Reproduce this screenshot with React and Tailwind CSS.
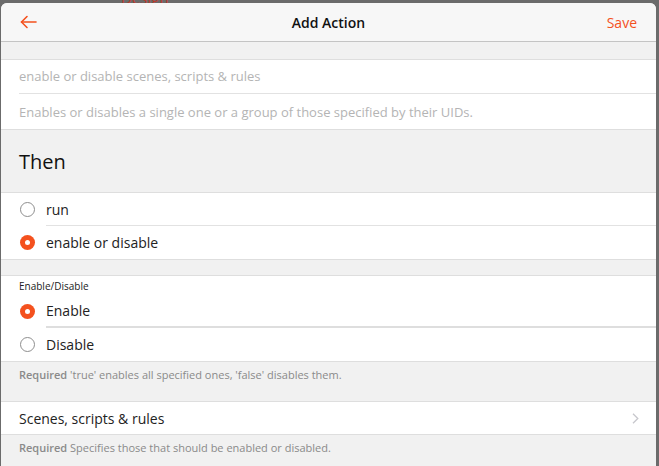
import React, { useState } from 'react';

function Radio({ checked }) {
    return checked ? (
        <span className="flex h-[15px] w-[15px] shrink-0 items-center justify-center rounded-full bg-[#f4511e]">
            <span className="h-[5px] w-[5px] rounded-full bg-white" />
        </span>
    ) : (
        <span className="h-[15px] w-[15px] shrink-0 rounded-full border border-[#8e8e8e] bg-white" />
    );
}

function RadioRow({ label, checked, onClick, divider, thick }) {
    return (
        <div className="flex h-[33px] cursor-pointer items-stretch" onClick={onClick}>
            <div className="flex w-[45px] shrink-0 items-center pl-[19px]">
                <Radio checked={checked} />
            </div>
            <div
                className={`flex flex-1 items-center text-[14px] text-[#222] ${
                    divider ? (thick ? 'border-b-2 border-[#dedede]' : 'border-b border-[#e2e2e2]') : ''
                }`}
            >
                {label}
            </div>
        </div>
    );
}

export default function App() {
    const [mode, setMode] = useState('toggle');
    const [enable, setEnable] = useState(true);

    return (
        <div
            className="relative h-[466px] w-[659px] overflow-hidden bg-[#6b6b6b] pl-px pr-[3px] pt-[3px]"
            style={{ fontFamily: '"Open Sans", "Noto Sans", sans-serif' }}
        >
            <span className="absolute left-[121px] top-[-13px] text-[15px] text-[#c0392b]">Design</span>

            <div className="relative h-full overflow-hidden rounded-t-[6px] bg-[#f1f1f1]">
                {/* Navbar */}
                <div className="flex h-[39px] items-center border-b border-[#c4c4c4] bg-[#f7f7f7] px-[19px]">
                    <button className="flex w-[60px] items-center text-[#f4511e]">
                        <svg width="17" height="14" viewBox="0 0 17 14" fill="none" stroke="currentColor" strokeWidth="1.6" strokeLinecap="round" strokeLinejoin="round">
                            <path d="M16 7H1.5" />
                            <path d="M7 1.5L1.5 7L7 12.5" />
                        </svg>
                    </button>
                    <div className="flex-1 text-center text-[14px] font-semibold text-[#111]">Add Action</div>
                    <button className="w-[60px] text-right text-[14px] text-[#f4511e]">Save</button>
                </div>

                <div className="h-[17px]" />

                {/* Description */}
                <div className="border-y border-[#dedede] bg-white pl-[18px]">
                    <div className="flex h-[34px] items-center pt-px border-b border-[#e2e2e2] text-[13px] text-[#b4b4b4]">
                        enable or disable scenes, scripts &amp; rules
                    </div>
                    <div className="flex h-[35px] items-center pt-[3px] text-[13px] text-[#b4b4b4]">
                        Enables or disables a single one or a group of those specified by their UIDs.
                    </div>
                </div>

                {/* Then */}
                <div className="flex h-[62px] items-center pl-[18px] pt-[2px] text-[20px] font-medium text-[#111]">Then</div>

                <div className="border-y border-[#dedede] bg-white">
                    <RadioRow label="run" checked={mode === 'run'} onClick={() => setMode('run')} divider />
                    <RadioRow label="enable or disable" checked={mode === 'toggle'} onClick={() => setMode('toggle')} />
                </div>

                <div className="h-[15px]" />

                {/* Enable/Disable */}
                <div className="border-t border-[#dedede] bg-white">
                    <div className="pl-[18px] pt-[3px] pb-[2px] text-[10px] leading-[14px] text-[#222]">Enable/Disable</div>
                    <RadioRow label="Enable" checked={enable} onClick={() => setEnable(true)} divider thick />
                    <RadioRow label="Disable" checked={!enable} onClick={() => setEnable(false)} />
                </div>
                <div className="h-[41px] border-y border-[#dedede] pl-[18px] pt-[5px] text-[11px] text-[#8a8a8a]">
                    <span className="font-semibold">Required</span> 'true' enables all specified ones, 'false' disables them.
                </div>

                {/* Scenes */}
                <div className="flex h-[33px] items-center justify-between border-b border-[#dedede] bg-white pl-[18px] pr-[17px]">
                    <span className="text-[14px] text-[#222]">Scenes, scripts &amp; rules</span>
                    <svg width="7" height="11" viewBox="0 0 7 11" fill="none" stroke="#c7c7cc" strokeWidth="1.3">
                        <path d="M1 0.8L5.8 5.5L1 10.2" />
                    </svg>
                </div>
                <div className="pl-[18px] pt-[5px] text-[11px] text-[#8a8a8a]">
                    <span className="font-semibold">Required</span> Specifies those that should be enabled or disabled.
                </div>
            </div>
        </div>
    );
}
